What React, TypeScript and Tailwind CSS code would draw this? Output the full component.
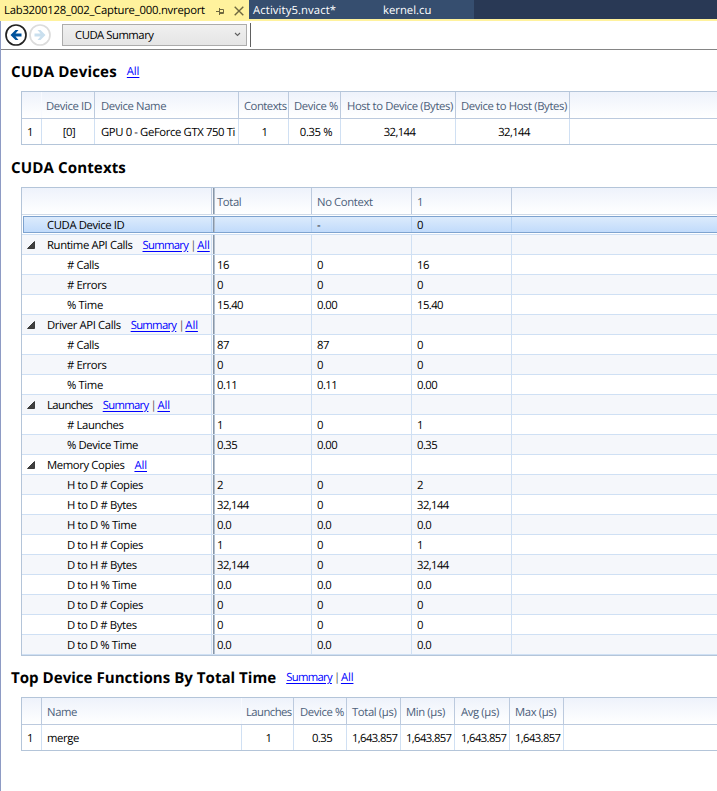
import type { ReactNode } from "react";

type Column = {
  label: string;
  value: string;
  width: string;
  align?: string;
  line?: string;
  labelClass?: string;
  valueClass?: string;
};

const LINE = "border-[#bccade]";
const SOFT = "border-[#f8faff]";

function Link({ children }: { children: ReactNode }) {
  return (
    <a className={`text-[#0000ff] underline decoration-1 underline-offset-[1.5px] ${children === "All" ? "tracking-[-0.1px]" : "tracking-[-0.7px]"}`}>
      {children}
    </a>
  );
}

function Links({ items }: { items: string[] }) {
  return (
    <span className="flex whitespace-nowrap">
      {items.map((item, i) => (
        <span key={item} className="flex">
          {i > 0 && <span className="w-[9px] pl-px text-center text-[#555]">|</span>}
          <Link>{item}</Link>
        </span>
      ))}
    </span>
  );
}

function Heading({ title, links = [], className, titleClass = "" }: { title: string; links?: string[]; className: string; titleClass?: string }) {
  return (
    <div className={`flex items-center pl-[10px] ${className}`}>
      <h2 className={`text-[15.1px] leading-5 font-bold whitespace-nowrap ${titleClass}`}>{title}</h2>
      <div className="ml-[10px]">
        <Links items={links} />
      </div>
    </div>
  );
}

function FlatTable({ columns }: { columns: Column[] }) {
  return (
    <div className="ml-[20px] border-y border-l border-[#b4c5d9]">
      <div className="flex h-[27px] border-b border-[#bccade] bg-linear-to-b from-[#eef2fb] to-white">
        {columns.map((c, i) => (
          <div
            key={i}
            className={`flex shrink-0 items-center border-r pt-[4px] whitespace-nowrap text-[#4c607a] ${c.width} ${c.line ?? LINE} ${c.labelClass ?? "pl-[6px]"}`}
          >
            {c.label}
          </div>
        ))}
      </div>
      <div className="flex h-[25px]">
        {columns.map((c, i) => (
          <div
            key={i}
            className={`flex shrink-0 items-center border-r border-[#d0e0f3] pt-[3px] whitespace-nowrap ${c.width} ${c.align ?? "justify-center"} ${c.valueClass ?? ""}`}
          >
            {c.value}
          </div>
        ))}
      </div>
    </div>
  );
}

type Row = { label: string; links?: string[]; group?: boolean; cells: string[] };

const rows: Row[] = [
  { label: "CUDA Device ID", cells: ["", "-", "0"] },
  { label: "Runtime API Calls", group: true, links: ["Summary", "All"], cells: ["", "", ""] },
  { label: "# Calls", cells: ["16", "0", "16"] },
  { label: "# Errors", cells: ["0", "0", "0"] },
  { label: "% Time", cells: ["15.40", "0.00", "15.40"] },
  { label: "Driver API Calls", group: true, links: ["Summary", "All"], cells: ["", "", ""] },
  { label: "# Calls", cells: ["87", "87", "0"] },
  { label: "# Errors", cells: ["0", "0", "0"] },
  { label: "% Time", cells: ["0.11", "0.11", "0.00"] },
  { label: "Launches", group: true, links: ["Summary", "All"], cells: ["", "", ""] },
  { label: "# Launches", cells: ["1", "0", "1"] },
  { label: "% Device Time", cells: ["0.35", "0.00", "0.35"] },
  { label: "Memory Copies", group: true, links: ["All"], cells: ["", "", ""] },
  { label: "H to D # Copies", cells: ["2", "0", "2"] },
  { label: "H to D # Bytes", cells: ["32,144", "0", "32,144"] },
  { label: "H to D % Time", cells: ["0.0", "0.0", "0.0"] },
  { label: "D to H # Copies", cells: ["1", "0", "1"] },
  { label: "D to H # Bytes", cells: ["32,144", "0", "32,144"] },
  { label: "D to H % Time", cells: ["0.0", "0.0", "0.0"] },
  { label: "D to D # Copies", cells: ["0", "0", "0"] },
  { label: "D to D # Bytes", cells: ["0", "0", "0"] },
  { label: "D to D % Time", cells: ["0.0", "0.0", "0.0"] },
];

/* Frozen-column divider between the labels and the values */
function Splitter() {
  return (
    <div className="flex w-[3px] shrink-0 self-stretch">
      <div className="w-px" />
      <div className="w-px bg-[#8796a8]" />
      <div className="w-px bg-[#b4c0ce]" />
    </div>
  );
}

function ContextRow({ row, index }: { row: Row; index: number }) {
  const selected = index === 0;
  const stripe = index % 2 ? "bg-[#f5f7fb]" : "bg-white";
  const line = selected ? "border-[#b3d0f2]" : "border-[#d0e0f3]";
  return (
    <div className={`flex h-5 border-b border-[#cfe0f4] ${selected ? "py-px pl-px" : stripe}`}>
      <div
        className={`flex min-w-0 flex-1 ${selected ? "border-y border-l border-[#7ea3cf] bg-linear-to-b from-[#dcebfc] to-[#c1dbfb]" : ""}`}
      >
        <div className={`flex shrink-0 items-center border-r pt-[2px] ${line} ${selected ? "w-[188px] pl-[23px]" : "w-[190px]"} ${!selected && !row.group ? "pl-[45px]" : ""}`}>
          {row.group && (
            <svg width="8" height="8" viewBox="0 0 8 8" className="mr-[12px] mb-[2px] ml-[5px] shrink-0">
              <path d="M7.5 .5v7h-7z" fill="#404040" stroke="#222" strokeWidth=".8" />
            </svg>
          )}
          <span className={`whitespace-nowrap ${row.label === "Launches" ? "tracking-[-0.55px]" : ""}`}>{row.label}</span>
          {row.links && (
            <span className="ml-[10px]">
              <Links items={row.links} />
            </span>
          )}
        </div>
        <Splitter />
        {row.cells.map((cell, i) => (
          <div key={i} className={`flex shrink-0 items-center border-r pt-[2px] tracking-[-0.58px] ${line} ${i === 0 ? "w-[97px] pl-[2px]" : "w-[100px] pl-[5px]"}`}>
            {cell}
          </div>
        ))}
      </div>
    </div>
  );
}

const deviceColumns: Column[] = [
  { label: "", value: "1", width: "w-[20px]", line: SOFT, valueClass: "pr-[3px]" },
  { label: "Device ID", value: "[0]", width: "w-[53px]", labelClass: "pl-[4px]", valueClass: "pl-[2px]" },
  { label: "Device Name", value: "GPU 0 - GeForce GTX 750 Ti", width: "w-[144px]", align: "justify-start", valueClass: "pl-[6px]" },
  { label: "Contexts", value: "1", width: "w-[50px]", labelClass: "pl-[5px] tracking-[-0.5px]", valueClass: "pl-[2px]" },
  { label: "Device %", value: "0.35 %", width: "w-[52px]", labelClass: "pl-[5px]", valueClass: "pl-[3px]" },
  { label: "Host to Device (Bytes)", value: "32,144", width: "w-[115px]", labelClass: "pl-[6px]", valueClass: "pl-[3px] tracking-[-0.58px]" },
  { label: "Device to Host (Bytes)", value: "32,144", width: "w-[114px]", labelClass: "pl-[5px]", valueClass: "pl-[3px] tracking-[-0.58px]" },
];

const functionColumns: Column[] = [
  { label: "", value: "1", width: "w-[20px]", valueClass: "pr-[3px]" },
  { label: "Name", value: "merge", width: "w-[200px]", line: SOFT, align: "justify-start", labelClass: "pl-[5px]", valueClass: "pl-[5px]" },
  { label: "Launches", value: "1", width: "w-[52px]", labelClass: "pl-[4px] tracking-[-0.55px]", valueClass: "pl-[2px]" },
  { label: "Device %", value: "0.35", width: "w-[53px]", labelClass: "pl-[6px]", valueClass: "pl-[4px] tracking-[-0.58px]" },
  { label: "Total (µs)", value: "1,643.857", width: "w-[54px]", labelClass: "pl-[5px]", align: "justify-start", valueClass: "pl-[5px] tracking-[-0.63px]" },
  { label: "Min (µs)", value: "1,643.857", width: "w-[54px]", labelClass: "pl-[5px]", align: "justify-start", valueClass: "pl-[5px] tracking-[-0.63px]" },
  { label: "Avg (µs)", value: "1,643.857", width: "w-[55px]", labelClass: "pl-[6px]", align: "justify-start", valueClass: "pl-[6px] tracking-[-0.63px]" },
  { label: "Max (µs)", value: "1,643.857", width: "w-[54px]", labelClass: "pl-[5px]", align: "justify-start", valueClass: "pl-[5px] tracking-[-0.63px]" },
];

function ArrowButton({ ring, fill }: { ring: string; fill: string }) {
  return (
    <svg width="24" height="24" viewBox="0 0 24 24" className="shrink-0">
      <circle cx="12" cy="12" r="10" fill="white" stroke={ring} strokeWidth="1.7" />
      <path d="M6.5 12 11.5 7h3l-3 3.4h6v3.2h-6l3 3.4h-3z" fill={fill} />
    </svg>
  );
}

export default function App() {
  return (
    <div className="flex h-[791px] w-[717px] flex-col overflow-hidden bg-white font-['Open_Sans',sans-serif] text-[11.3px] leading-4 tracking-[-0.38px] text-black [text-rendering:geometricPrecision]">
      <div className="flex h-[21px] shrink-0 border-b-2 border-[#fff29d] bg-[#293955] text-white">
        <div className="flex h-[21px] w-[249px] items-center bg-[#fff29d] pl-[4px] text-black">
          <span className="w-[202px] pt-px tracking-[-0.23px] whitespace-nowrap">Lab3200128_002_Capture_000.nvreport</span>
          <svg width="10" height="8" viewBox="0 0 10 8" className="ml-[10px] shrink-0" fill="none" stroke="#6e6840">
            <path d="M0 4.5h3M3.5 1v7M3.5 2.5h4v4h-4M4 5.5h4" />
          </svg>
          <svg width="10" height="10" viewBox="0 0 10 10" className="ml-[8px] shrink-0" fill="none" stroke="#6e6840" strokeWidth="1.4">
            <path d="m.7.7 8.6 8.6m0-8.6L.7 9.3" />
          </svg>
        </div>
        <div className="flex h-[19px] w-[225px] items-center bg-[#364e6f] pt-[3px] tracking-[0.1px]">
          <span className="w-[130px] pl-[4px]">Activity5.nvact*</span>
          <span className="pl-[4px] tracking-normal">kernel.cu</span>
        </div>
      </div>
      <div className="flex min-h-0 flex-1 flex-col border-l border-[#8e9bc4]">
        <div className="flex h-[29px] shrink-0 items-center border-b border-[#858585] pb-px pl-[3px]">
          <ArrowButton ring="#222" fill="#00539c" />
          <div className="-scale-x-100">
            <ArrowButton ring="#dcdcdc" fill="#c9dfee" />
          </div>
          <div className="ml-[10px] flex h-[22px] w-[185px] items-center justify-between border border-[#acacac] bg-linear-to-b from-[#f0f0f0] to-[#e5e5e5] pr-[5px] pl-[12px]">
            <span className="pt-[3px] tracking-[-0.48px]">CUDA Summary</span>
            <svg width="7" height="5" viewBox="0 0 7 5" fill="none" stroke="#606060" strokeWidth="1.1">
              <path d="m1 1 2.5 2.5L6 1" />
            </svg>
          </div>
          <div className="ml-[3px] h-[24px] w-px bg-[#606060]" />
        </div>
        <Heading title="CUDA Devices" links={["All"]} className="h-[41px] pt-[3px]" titleClass="tracking-[0.15px]" />
        <FlatTable columns={deviceColumns} />
        <Heading title="CUDA Contexts" className="h-[42px] pt-[3px]" titleClass="tracking-[0.1px]" />
        <div className="ml-[20px] border-y border-l border-[#b4c5d9]">
          <div className="flex h-[27px] border-b border-[#d0dbe8] bg-linear-to-b from-[#eef2fb] to-white text-[#4c607a]">
            <div className="w-[190px] shrink-0 border-r border-[#bccade]" />
            <Splitter />
            <div className="flex w-[97px] items-center border-r border-[#bccade] pt-[4px] pl-[2px]">Total</div>
            <div className="flex w-[100px] items-center border-r border-[#bccade] pt-[4px] pl-[5px]">No Context</div>
            <div className="flex w-[100px] items-center border-r border-[#bccade] pt-[4px] pl-[5px]">1</div>
          </div>
          {rows.map((row, i) => (
            <ContextRow key={i} row={row} index={i} />
          ))}
        </div>
        <Heading title="Top Device Functions By Total Time" links={["Summary", "All"]} className="h-[41px] pt-[3px]" titleClass="tracking-normal" />
        <FlatTable columns={functionColumns} />
      </div>
    </div>
  );
}
